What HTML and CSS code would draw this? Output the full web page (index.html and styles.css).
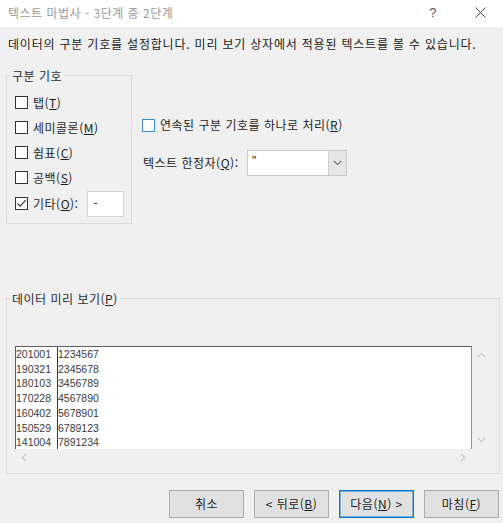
FILE: index.html
```html
<!DOCTYPE html>
<html lang="ko">
<head>
<meta charset="utf-8">
<title>텍스트 마법사</title>
<link rel="stylesheet" href="styles.css">
</head>
<body>
<div class="window">
  <header class="titlebar">
    <span class="title">텍스트 마법사 - 3단계 중 2단계</span>
    <span class="help">?</span>
    <span class="close"><svg width="11" height="11" viewBox="0 0 11 11"><path d="M0.5 0.5L10.5 10.5M10.5 0.5L0.5 10.5" stroke="#444" stroke-width="1" fill="none"/></svg></span>
  </header>

  <p class="desc">데이터의 구분 기호를 설정합니다. 미리 보기 상자에서 적용된 텍스트를 볼 수 있습니다.</p>

  <div class="top">
    <div class="group sep-group">
      <span class="legend">구분 기호</span>
      <div class="checks">
        <div class="row"><span class="cb"></span>탭(<u>T</u>)</div>
        <div class="row"><span class="cb"></span>세미콜론(<u>M</u>)</div>
        <div class="row"><span class="cb"></span>쉼표(<u>C</u>)</div>
        <div class="row"><span class="cb"></span>공백(<u>S</u>)</div>
        <div class="row other"><span class="cb"><svg width="11" height="11" viewBox="0 0 11 11"><path d="M1.5 5.5L4.2 8.3L9.6 2.2" stroke="#222" stroke-width="1.1" fill="none"/></svg></span>기타(<u>O</u>):<span class="other-input">-</span></div>
      </div>
    </div>

    <div class="options">
      <div class="row consec"><span class="cb focus"></span>연속된 구분 기호를 하나로 처리(<u>R</u>)</div>
      <div class="qualifier">
        <span class="qlabel">텍스트 한정자(<u>Q</u>):</span>
        <div class="select">
          <span class="val">"</span>
          <span class="drop"><svg width="9" height="6" viewBox="0 0 9 6"><path d="M0.8 1L4.5 4.6L8.2 1" stroke="#6d6d6d" stroke-width="1.1" fill="none"/></svg></span>
        </div>
      </div>
    </div>
  </div>

  <div class="group preview-group">
    <span class="legend">데이터 미리 보기(<u>P</u>)</span>
    <div class="preview">
      <div class="data">
        <div class="col c1">201001<br>190321<br>180103<br>170228<br>160402<br>150529<br>141004</div>
        <div class="col c2">1234567<br>2345678<br>3456789<br>4567890<br>5678901<br>6789123<br>7891234</div>
      </div>
      <div class="vscroll">
        <svg width="9" height="6" viewBox="0 0 9 6"><path d="M0.8 5L4.5 1.4L8.2 5" stroke="#c4c4c4" stroke-width="1.1" fill="none"/></svg>
        <svg width="9" height="6" viewBox="0 0 9 6"><path d="M0.8 1L4.5 4.6L8.2 1" stroke="#c4c4c4" stroke-width="1.1" fill="none"/></svg>
      </div>
      <div class="hscroll">
        <svg width="6" height="9" viewBox="0 0 6 9"><path d="M5 0.8L1.4 4.5L5 8.2" stroke="#c4c4c4" stroke-width="1.1" fill="none"/></svg>
        <svg width="6" height="9" viewBox="0 0 6 9"><path d="M1 0.8L4.6 4.5L1 8.2" stroke="#c4c4c4" stroke-width="1.1" fill="none"/></svg>
      </div>
    </div>
  </div>

  <div class="buttons">
    <button class="btn">취소</button>
    <button class="btn">&lt; 뒤로(<u>B</u>)</button>
    <button class="btn default">다음(<u>N</u>) &gt;</button>
    <button class="btn">마침(<u>F</u>)</button>
  </div>
</div>
</body>
</html>
```

FILE: styles.css
```css
* { box-sizing: border-box; }

html, body {
  margin: 0;
  padding: 0;
}

body {
  width: 503px;
  height: 523px;
  overflow: hidden;
  background: #f0f0f0;
  font-family: "Noto Sans CJK KR", "Noto Sans", sans-serif;
  font-size: 12px;
  letter-spacing: 0.5px;
  color: #1e1e1e;
}

.window {
  width: 503px;
  height: 523px;
}

.titlebar {
  height: 27px;
  background: #ffffff;
  display: flex;
  align-items: center;
  padding: 0 17px 2px 8px;
}

.title {
  color: #9a9a9a;
  font-size: 12px;
  line-height: 16px;
}

.help {
  margin-left: auto;
  margin-right: 38px;
  color: #555;
  font-family: "Liberation Sans", sans-serif;
  font-size: 13px;
  line-height: 16px;
}

.close {
  display: flex;
  width: 11px;
  height: 11px;
}

.desc {
  margin: 9px 0 0 8px;
  line-height: 16px;
  font-size: 12px;
  letter-spacing: 0.8px;
  color: #1a1a1a;
  white-space: nowrap;
}

u { text-decoration: underline; text-underline-offset: 1px; }

.top {
  display: flex;
  align-items: flex-start;
  margin: 23px 0 0 6px;
}

.group {
  border: 1px solid #dcdcdc;
}

.legend {
  display: block;
  width: max-content;
  margin: -8px 0 0 3px;
  padding: 0 2px;
  line-height: 16px;
  background: #f0f0f0;
  color: #2a2a2a;
}

.sep-group {
  width: 126px;
  height: 149px;
}

.checks {
  margin-top: 6px;
  padding-left: 8px;
}

.row {
  display: flex;
  align-items: center;
  height: 25px;
  line-height: 16px;
  white-space: nowrap;
}

.row.other {
  height: 27px;
}

.cb {
  display: flex;
  align-items: center;
  justify-content: center;
  width: 13px;
  height: 13px;
  flex: none;
  border: 1px solid #333;
  background: #fff;
  margin-right: 5px;
}

.cb.focus {
  border-color: #3d8fdc;
}

.other-input {
  width: 37px;
  height: 26px;
  margin-left: 9px;
  padding: 3px 0 0 5px;
  border: 1px solid #d4d4d4;
  background: #fff;
  line-height: 16px;
}

.options {
  margin-left: 10px;
}

.row.consec {
  height: 16px;
  margin-top: 42px;
}

.qualifier {
  display: flex;
  align-items: center;
  margin-top: 17px;
  padding-left: 1px;
}

.qlabel {
  width: 104px;
  line-height: 16px;
  white-space: nowrap;
}

.select {
  display: flex;
  width: 100px;
  height: 26px;
  border: 1px solid #cacaca;
  background: #fff;
}

.val {
  flex: 1;
  padding: 2px 0 0 4px;
  line-height: 16px;
  font-family: "Liberation Sans", sans-serif;
}

.drop {
  display: flex;
  align-items: center;
  justify-content: center;
  width: 18px;
  background: #e6e6e6;
  border-left: 1px solid #d2d2d2;
}

.preview-group {
  width: 494px;
  margin: 74px 0 0 6px;
  padding-bottom: 7px;
}

.preview {
  display: grid;
  grid-template-columns: 457px 17px;
  grid-template-rows: 103px 17px;
  margin: 39px 0 0 8px;
}

.data {
  display: flex;
  background: #fff;
  border-top: 1px solid #5e5e5e;
  border-left: 1px solid #5e5e5e;
  border-right: 1px solid #8e8e8e;
  font-family: "Liberation Sans", sans-serif;
  font-size: 10.5px;
  letter-spacing: 0;
  line-height: 14.7px;
  color: #3a3a3a;
}

.col.c1 {
  width: 42px;
  border-right: 1px solid #3a3a3a;
}

.col.c2 {
  padding-left: 0;
}

.vscroll {
  display: flex;
  flex-direction: column;
  justify-content: space-between;
  align-items: center;
  padding: 6px 0 6px 1px;
}

.hscroll {
  display: flex;
  justify-content: space-between;
  align-items: center;
  padding: 0 6px 0 6px;
}

.buttons {
  display: flex;
  justify-content: flex-end;
  gap: 10px;
  margin-top: 16px;
  padding-right: 4px;
}

.btn {
  width: 75px;
  height: 28px;
  padding: 0;
  border: 1px solid #adadad;
  background: #e1e1e1;
  font-family: "Noto Sans CJK KR", "Noto Sans", sans-serif;
  font-size: 12px;
  letter-spacing: 0.5px;
  color: #1e1e1e;
  line-height: 16px;
}

.btn.default {
  border-color: #0078d7;
  box-shadow: inset 0 0 0 1px rgba(0, 120, 215, 0.45);
}
```
